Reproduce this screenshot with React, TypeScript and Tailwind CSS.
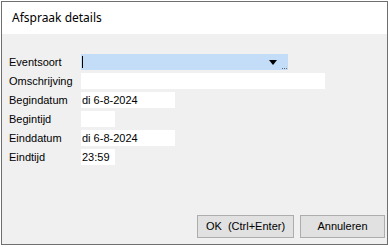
import React from 'react';

// Dialog: "Afspraak details" – classic WinForms look
const labelFont = { fontFamily: '"Liberation Sans", Arial, sans-serif' };

function Field({ width, children }: { width: string; children?: React.ReactNode }) {
  return (
    <div className={`h-[16px] ${width} bg-white pl-[1px] flex items-center text-[11px] leading-none text-black`}>
      {children}
    </div>
  );
}

function Row({ label, children }: { label: string; children: React.ReactNode }) {
  return (
    <div className="flex items-center h-[16px]">
      <div className="w-[72px] text-[11px] leading-none text-black">{label}</div>
      {children}
    </div>
  );
}

export default function App() {
  return (
    <div className="w-[388px] h-[247px] bg-white pl-[1px] pt-[1px]" style={labelFont}>
      <div className="w-[387px] h-[244px] border border-[#6f6f6f] bg-[#f0f0f0] flex flex-col">
        {/* title bar */}
        <div className="h-[32px] bg-white flex items-center pl-[10px] shrink-0">
          <span className="text-[12px] text-black" style={{ fontFamily: '"Noto Sans", "Open Sans", sans-serif' }}>
            Afspraak details
          </span>
        </div>

        {/* form */}
        <div className="flex flex-col gap-[3px] pl-[7px] pt-[20px]">
          <Row label="Eventsoort">
            <div className="relative h-[16px] w-[207px] bg-[#c3dcf7] flex items-center">
              <div className="ml-[1px] w-[1px] h-[12px] bg-black" />
              <svg className="absolute left-[188px] top-[6px]" width="8" height="5" viewBox="0 0 8 5">
                <path d="M0 0H8L4 5Z" fill="#000" />
              </svg>
              <div className="absolute right-[1px] bottom-[1px] flex gap-[1px]">
                <div className="w-[1px] h-[1px] bg-[#6b6b6b]" />
                <div className="w-[1px] h-[1px] bg-[#6b6b6b]" />
                <div className="w-[1px] h-[1px] bg-[#6b6b6b]" />
              </div>
            </div>
          </Row>
          <Row label="Omschrijving">
            <Field width="w-[244px]" />
          </Row>
          <Row label="Begindatum">
            <Field width="w-[94px]">di 6-8-2024</Field>
          </Row>
          <Row label="Begintijd">
            <Field width="w-[34px]" />
          </Row>
          <Row label="Einddatum">
            <Field width="w-[94px]">di 6-8-2024</Field>
          </Row>
          <Row label="Eindtijd">
            <Field width="w-[34px]">23:59</Field>
          </Row>
        </div>

        {/* buttons */}
        <div className="mt-auto mb-[6px] flex justify-end gap-[6px] pr-[2px]">
          <button className="h-[23px] w-[97px] bg-[#e1e1e1] border border-[#adadad] text-[11px] text-black whitespace-pre">
            {'OK  (Ctrl+Enter)'}
          </button>
          <button className="h-[23px] w-[85px] bg-[#e1e1e1] border border-[#adadad] text-[11px] text-black">
            Annuleren
          </button>
        </div>
      </div>
    </div>
  );
}
